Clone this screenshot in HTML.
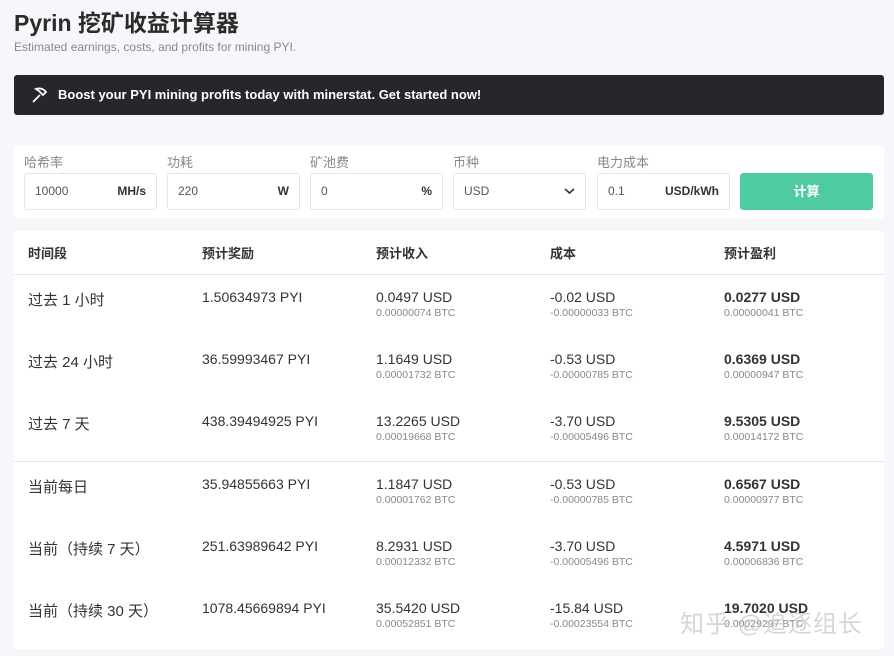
<!DOCTYPE html>
<html><head><meta charset="utf-8"><style>
*{box-sizing:border-box;margin:0;padding:0}
body{width:894px;height:656px;overflow:hidden;background:#f6f7fa;font-family:"Liberation Sans","Noto Sans CJK SC",sans-serif;color:#333;position:relative}
h1{position:absolute;left:14px;top:8px;font-size:23px;line-height:30px;font-weight:bold;color:#2b2b2b}
.sub{position:absolute;left:14px;top:40px;font-size:12px;color:#888}
.banner{position:absolute;left:14px;top:75px;width:870px;height:40px;background:#27272b;border-radius:3px;color:#fff;font-size:13px;font-weight:bold;line-height:40px;padding-left:44px}
.banner svg{position:absolute;left:16px;top:11px}
.form{position:absolute;left:14px;top:145px;width:870px;height:74px;background:#fff;border-radius:4px}
.f{position:absolute;top:0}
.f label{position:absolute;top:7px;left:0;font-size:13px;color:#888;white-space:nowrap}
.f .in{position:absolute;top:28px;left:0;width:133px;height:37px;border:1px solid #e3e5ea;border-radius:3px;font-size:12px;color:#555;line-height:35px;padding-left:10px}
.f .in b{position:absolute;right:10px;top:0;color:#333}
.btn{position:absolute;left:726px;top:28px;width:133px;height:37px;background:#4fcba0;border-radius:3px;color:#fff;font-weight:bold;font-size:13px;text-align:center;line-height:37px}
.tbl{position:absolute;left:14px;top:231px;width:870px;height:418px;background:#fff;border-radius:4px}
.hd{position:absolute;top:0;left:0;width:870px;height:44px;border-bottom:1px solid #e4e6ea}
.c{position:absolute;font-size:13px;white-space:nowrap}
.hd .c{top:12px;font-weight:bold;font-size:13px;color:#333}
.row .c{font-size:14px;color:#333}
.row .s{font-size:10.5px;color:#888;position:absolute;top:18px;left:0}
.sep{position:absolute;left:0;top:230px;width:870px;height:1px;background:#e4e6ea}
.wm{position:absolute;left:680px;top:604px;font-size:24px;color:rgba(200,200,200,.75);letter-spacing:1px}
</style></head><body>
<h1>Pyrin 挖矿收益计算器</h1>
<div class="sub">Estimated earnings, costs, and profits for mining PYI.</div>
<div class="banner"><svg width="18" height="18" viewBox="0 0 18 18" fill="none" stroke="#fff" stroke-width="1.8"><path d="M3 16 L10 9"/><path d="M6 3 Q12 1 16 6 L13 9 L9 5 Z"/></svg>Boost your PYI mining profits today with minerstat. Get started now!</div>
<div class="form">
<div class="f" style="left:10px"><label>哈希率</label><div class="in">10000<b>MH/s</b></div></div>
<div class="f" style="left:153px"><label>功耗</label><div class="in">220<b>W</b></div></div>
<div class="f" style="left:296px"><label>矿池费</label><div class="in">0<b>%</b></div></div>
<div class="f" style="left:439px"><label>币种</label><div class="in">USD<b><svg width="11" height="8" viewBox="0 0 11 8"><path d="M1 2 L5.5 6 L10 2" stroke="#333" stroke-width="1.6" fill="none"/></svg></b></div></div>
<div class="f" style="left:583px"><label>电力成本</label><div class="in">0.1<b>USD/kWh</b></div></div>
<div class="btn">计算</div>
</div>
<div class="tbl">
<div class="hd"><div class="c" style="left:14px">时间段</div><div class="c" style="left:188px">预计奖励</div><div class="c" style="left:362px">预计收入</div><div class="c" style="left:536px">成本</div><div class="c" style="left:710px">预计盈利</div></div>
<div class="row" style="position:absolute;top:58px;left:0">
<div class="c" style="left:14px;font-size:15px">过去 1 小时</div><div class="c" style="left:188px">1.50634973 PYI</div>
<div class="c" style="left:362px">0.0497 USD<div class="s">0.00000074 BTC</div></div>
<div class="c" style="left:536px">-0.02 USD<div class="s">-0.00000033 BTC</div></div>
<div class="c" style="left:710px;font-weight:bold">0.0277 USD<div class="s" style="font-weight:normal">0.00000041 BTC</div></div></div>
<div class="row" style="position:absolute;top:120px;left:0">
<div class="c" style="left:14px;font-size:15px">过去 24 小时</div><div class="c" style="left:188px">36.59993467 PYI</div>
<div class="c" style="left:362px">1.1649 USD<div class="s">0.00001732 BTC</div></div>
<div class="c" style="left:536px">-0.53 USD<div class="s">-0.00000785 BTC</div></div>
<div class="c" style="left:710px;font-weight:bold">0.6369 USD<div class="s" style="font-weight:normal">0.00000947 BTC</div></div></div>
<div class="row" style="position:absolute;top:182px;left:0">
<div class="c" style="left:14px;font-size:15px">过去 7 天</div><div class="c" style="left:188px">438.39494925 PYI</div>
<div class="c" style="left:362px">13.2265 USD<div class="s">0.00019668 BTC</div></div>
<div class="c" style="left:536px">-3.70 USD<div class="s">-0.00005496 BTC</div></div>
<div class="c" style="left:710px;font-weight:bold">9.5305 USD<div class="s" style="font-weight:normal">0.00014172 BTC</div></div></div>
<div class="sep"></div>
<div class="row" style="position:absolute;top:245px;left:0">
<div class="c" style="left:14px;font-size:15px">当前每日</div><div class="c" style="left:188px">35.94855663 PYI</div>
<div class="c" style="left:362px">1.1847 USD<div class="s">0.00001762 BTC</div></div>
<div class="c" style="left:536px">-0.53 USD<div class="s">-0.00000785 BTC</div></div>
<div class="c" style="left:710px;font-weight:bold">0.6567 USD<div class="s" style="font-weight:normal">0.00000977 BTC</div></div></div>
<div class="row" style="position:absolute;top:307px;left:0">
<div class="c" style="left:14px;font-size:15px">当前（持续 7 天）</div><div class="c" style="left:188px">251.63989642 PYI</div>
<div class="c" style="left:362px">8.2931 USD<div class="s">0.00012332 BTC</div></div>
<div class="c" style="left:536px">-3.70 USD<div class="s">-0.00005496 BTC</div></div>
<div class="c" style="left:710px;font-weight:bold">4.5971 USD<div class="s" style="font-weight:normal">0.00006836 BTC</div></div></div>
<div class="row" style="position:absolute;top:369px;left:0">
<div class="c" style="left:14px;font-size:15px">当前（持续 30 天）</div><div class="c" style="left:188px">1078.45669894 PYI</div>
<div class="c" style="left:362px">35.5420 USD<div class="s">0.00052851 BTC</div></div>
<div class="c" style="left:536px">-15.84 USD<div class="s">-0.00023554 BTC</div></div>
<div class="c" style="left:710px;font-weight:bold">19.7020 USD<div class="s" style="font-weight:normal">0.00029297 BTC</div></div></div>
</div>
<div class="wm">知乎 @追逐组长</div>
</body></html>
